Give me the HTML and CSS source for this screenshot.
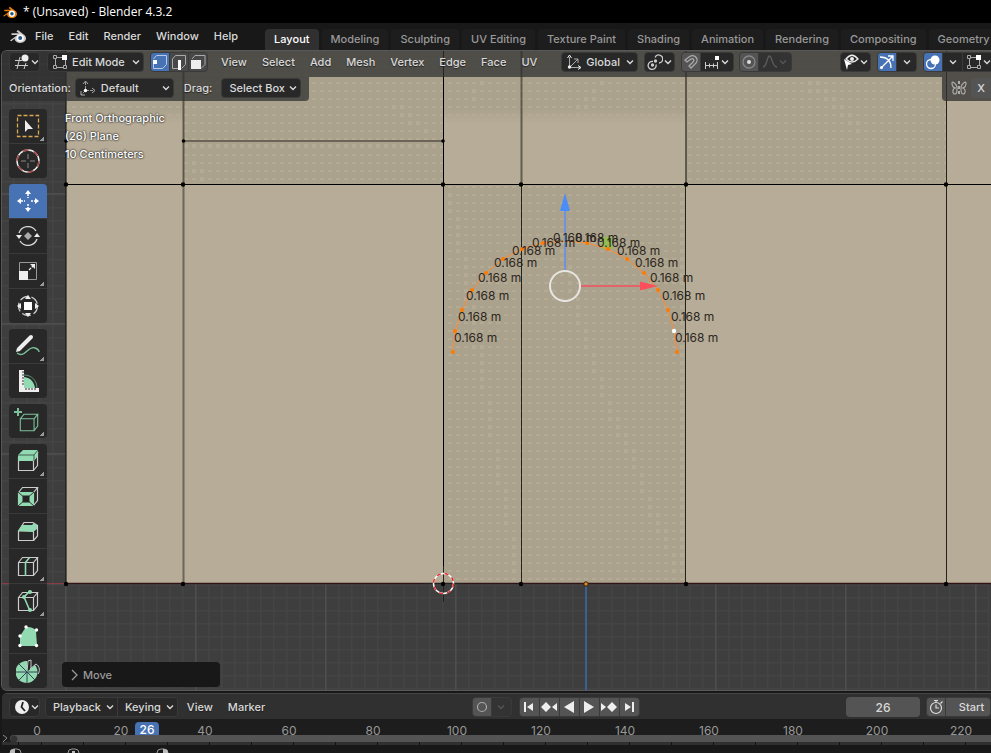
FILE: index.html
```html
<!DOCTYPE html>
<html lang="en">

<head>
    <meta charset="UTF-8">
    <meta name="viewport" content="width=device-width, initial-scale=1.0">
    <title>* (Unsaved) - Blender 4.3.2</title>

    <link rel="stylesheet" href="styles.css">
</head>

<body>
    <!-- Shared icons -->
    <svg class="sprite" aria-hidden="true">
        <symbol id="chevron" viewBox="0 0 10 10"><path d="M2 3.5l3 3 3-3" fill="none" stroke="currentColor" stroke-width="1.4"/></symbol>
        <symbol id="blender" viewBox="0 0 18 16">
            <path d="M1 12.5L8.5 7H2.5V5.3H10L7.5 3.4 8.9 2l7 5.4c3 3.8-.5 7.6-4.7 7.6-3.6 0-5.6-2.2-5.6-4.4L2.3 13.2z" fill="currentColor"/>
            <circle class="logo-ring" cx="11.2" cy="10" r="3.6"/>
            <circle class="logo-eye" cx="11.2" cy="10" r="2"/>
        </symbol>
        <symbol id="vertices" viewBox="0 0 16 16">
            <path d="M3.5 5v7M5 13.5h7M13.5 12V6M5 3.5h5" fill="none" stroke="#aaa"/>
            <path d="M1.5 1.5h3v3h-3zM1.5 11.5h3v3h-3zM11.500 11.500h3v3h-3z" fill="none" stroke="#aaa"/>
            <path d="M10 1h5v5h-5z" fill="#fff"/>
        </symbol>
        <symbol id="cube" viewBox="0 0 24 24"><path d="M2.500 8.500h15v13h-15zM2.500 8.500l4-5h15l-4 5M21.500 3.500v13l-4 5" fill="none" stroke="currentColor" stroke-width="1.200"/></symbol>
    </svg>

    <!-- Window title -->
    <header class="titlebar">
        <svg class="logo logo-orange" width="16" height="14"><use href="#blender"/></svg>
        <span>* (Unsaved) - Blender 4.3.2</span>
    </header>

    <!-- Main menu and workspaces -->
    <div class="topbar">
        <svg class="logo logo-grey" width="18" height="16"><use href="#blender"/></svg>
        <nav class="menus">
            <a href="#">File</a>
            <a href="#">Edit</a>
            <a href="#">Render</a>
            <a href="#">Window</a>
            <a href="#">Help</a>
        </nav>
        <nav class="tabs">
            <a href="#" class="active">Layout</a>
            <a href="#">Modeling</a>
            <a href="#">Sculpting</a>
            <a href="#">UV Editing</a>
            <a href="#">Texture Paint</a>
            <a href="#">Shading</a>
            <a href="#">Animation</a>
            <a href="#">Rendering</a>
            <a href="#">Compositing</a>
            <a href="#">Geometry Nodes</a>
        </nav>
    </div>

    <!-- 3D viewport -->
    <main class="viewport">
        <svg class="scene" role="img" aria-label="Front orthographic view">
            <defs>
                <pattern id="minor" x="0" y="12" width="13" height="13" patternUnits="userSpaceOnUse"><path d="M0 .5h13M.5 0v13" stroke="#444" fill="none" stroke-width="2"/></pattern>
                <pattern id="major" x="65" y="63" width="130" height="130" patternUnits="userSpaceOnUse"><path d="M0 .5h130M.5 0v130" stroke="#4e4e4e" fill="none" stroke-width="2"/></pattern>
                <pattern id="dots" x="0" y="2" width="8" height="8" patternUnits="userSpaceOnUse"><rect width="4" height="2" fill="#b5ab95"/></pattern>
                <linearGradient id="fade" x1="0" y1="0" x2="0" y2="1"><stop offset=".8" stop-color="#aba28d"/><stop offset="1" stop-color="#b7ac97"/></linearGradient>
            </defs>
            <g transform="translate(-2 -51)">
                <rect y="51" width="100%" height="640" fill="#3e3e3e"/>
                <rect y="51" width="100%" height="640" fill="url(#minor)"/>
                <rect y="51" width="100%" height="640" fill="url(#major)"/>
                <path d="M0 583.500h66" stroke="#8d3a45" stroke-width="1"/>

                <!-- wall faces -->
                <rect x="66" y="51" width="100%" height="533" fill="#b7ac97"/>
                <rect x="66" y="51" width="117" height="73" fill="url(#fade)"/>
                <rect x="443" y="51" width="243" height="73" fill="url(#fade)"/>
                <path d="M183 51h260v133H183zM686 51h260v133H686zM443 184h243v400H443z" fill="#aba28d"/>
                <path d="M66 51h620v65H66zM183 116h260v68H183zM686 51h260v133H686zM443 184h243v400H443z" fill="url(#dots)"/>
                <path class="specks" d="M450 193v24M458 217v40M466 257v48M474 305v48M482 345v48M490 401v40M498 449v40M506 489v40M514 537v40M594 353v24M602 377v20M610 401v20M618 417v20M626 433v20M634 449v20M642 473v20M650 497v20M658 513v20M666 529v20M674 553v24M682 193v384M562 233v32M570 265v32M578 297v32M586 329v24M394 105v4M402 105v12M410 113v12M418 121v4M426 129v4M194 161v12M202 169v12M474 89v16M482 81v4M578 105v12M586 97v12M594 89v12M602 81v4M810 81v12M818 81v12M826 89v12M834 97v12M842 105v12M850 113v12M858 121v12"/>
                <path class="specks" d="M184 146h256"/>

                <!-- edges -->
                <path d="M183.500 184v400" stroke="#3d3930" stroke-opacity=".6" stroke-width="2" fill="none"/>
                <path d="M183.500 51v133M521.500 51v133M686 51v133" stroke="#3d3930" stroke-opacity=".7" stroke-width="2" fill="none"/>
                <path d="M183 141h260" stroke="#6b6657" stroke-width="2"/>
                <path d="M521.500 184v400M685.500 184v400M946.500 51v533" stroke="#252219" fill="none"/>
                <path d="M66 51v533M443.500 51v533M66 184.500h925" stroke="#000" fill="none"/>
                <path d="M66 583.500h925" stroke="#321416" stroke-width="1.500"/>
                <path d="M586 584v107" stroke="#3a6194" stroke-width="2"/>
                <path d="M423 583.500h40M443.500 566v36" stroke="#222" stroke-width="1"/>
                <g fill="#000">
                    <circle cx="66" cy="184.500" r="2.200"/><circle cx="183" cy="184.500" r="2.200"/><circle cx="443" cy="184.500" r="2.200"/><circle cx="521" cy="184.500" r="2.200"/><circle cx="686" cy="184.500" r="2.200"/><circle cx="946" cy="184.500" r="2.200"/>
                    <circle cx="66" cy="584" r="2.200"/><circle cx="183" cy="584" r="2.200"/><circle cx="443" cy="584" r="2.200"/><circle cx="521" cy="584" r="2.200"/><circle cx="686" cy="584" r="2.200"/><circle cx="946" cy="584" r="2.200"/>
                    <circle cx="66" cy="141" r="1.800"/><circle cx="183.500" cy="141" r="1.800"/><circle cx="443" cy="141" r="1.800"/>
                </g>

                <!-- 3D cursor and origin -->
                <circle cx="443.500" cy="583.500" r="10" fill="none" stroke="#fff" stroke-width="1.400"/>
                <circle cx="443.500" cy="583.500" r="10" fill="none" stroke="#e22b2b" stroke-width="1.400" stroke-dasharray="4 4"/>
                <circle cx="586" cy="584" r="2.200" fill="#e08a20" stroke="#2a2010"/>

                <!-- selected arch -->
                <rect x="601" y="237" width="12" height="12" fill="#8dc63c" fill-opacity=".7"/>
                <polyline points="453,352 455,331 462,310 472,290 486,273 503,259 522,249 543,243 565,241 587,243 608,249 627,259 644,273 658,290 668,310 674,331 677,352" fill="none" stroke="#ff8c32"/>
                <g fill="#ff7a00">
                    <circle cx="453" cy="352" r="2"/><circle cx="455" cy="331" r="2"/><circle cx="462" cy="310" r="2"/><circle cx="472" cy="290" r="2"/><circle cx="486" cy="273" r="2"/><circle cx="503" cy="259" r="2"/><circle cx="522" cy="249" r="2"/><circle cx="543" cy="243" r="2"/>
                    <circle cx="587" cy="243" r="2"/><circle cx="608" cy="249" r="2"/><circle cx="627" cy="259" r="2"/><circle cx="644" cy="273" r="2"/><circle cx="658" cy="290" r="2"/><circle cx="668" cy="310" r="2"/><circle cx="677" cy="352" r="2"/>
                </g>
                <circle cx="674" cy="331" r="2.200" fill="#fff"/>

                <!-- move gizmo -->
                <path d="M565 270v-60" stroke="#6f93dc" stroke-width="2"/>
                <path d="M565 193l5 18h-10z" fill="#4b8df8"/>
                <path d="M581 286h60" stroke="#e4636a" stroke-width="2"/>
                <path d="M658 286l-18 4.500v-9z" fill="#fb4f5c"/>
                <circle cx="565" cy="286" r="15" fill="none" stroke="#e8e6e2" stroke-width="2"/>

                <!-- edge lengths -->
                <g class="lengths">
                    <text x="454" y="342">0.168 m</text>
                    <text x="458" y="321">0.168 m</text>
                    <text x="466" y="300">0.168 m</text>
                    <text x="478" y="282">0.168 m</text>
                    <text x="494" y="267">0.168 m</text>
                    <text x="512" y="255">0.168 m</text>
                    <text x="532" y="247">0.168 m</text>
                    <text x="553" y="242">0.168 m</text>
                    <text x="575" y="242">0.168 m</text>
                    <text x="597" y="247">0.168 m</text>
                    <text x="617" y="255">0.168 m</text>
                    <text x="635" y="267">0.168 m</text>
                    <text x="650" y="282">0.168 m</text>
                    <text x="662" y="300">0.168 m</text>
                    <text x="671" y="321">0.168 m</text>
                    <text x="675" y="342">0.168 m</text>
                </g>
            </g>
        </svg>

        <!-- Viewport header -->
        <div class="view-header">
            <button class="box editor-type" aria-label="Editor type">
                <svg width="16" height="16"><path d="M1 6.500h7M1 11.500h13M6 3L3 15M12 9l-2 6" stroke="#ccc" fill="none"/><circle cx="11" cy="4" r="3.500" fill="#eee"/></svg>
                <svg width="10" height="10"><use href="#chevron"/></svg>
            </button>
            <label class="box dropdown mode">
                <svg width="16" height="16"><use href="#vertices"/></svg>
                <select aria-label="Mode"><option>Edit Mode</option></select>
                <svg width="10" height="10"><use href="#chevron"/></svg>
            </label>
            <div class="joined select-modes">
                <button class="on" aria-label="Vertex select"><svg width="16" height="16"><path d="M1.500 5l3-3.500h10v9l-4 4h-9v-5" fill="none" stroke="#b9cae8"/><path d="M1 6h4v4H1z" fill="#fff"/></svg></button>
                <button aria-label="Edge select"><svg width="16" height="16"><path d="M7 14.500H1.500V5l3-3.500h10v9l-4 4" fill="none" stroke="#aaa"/><path d="M7 6h3v10H7z" fill="#fff"/></svg></button>
                <button aria-label="Face select"><svg width="16" height="16"><path d="M2 5l3-3.500h10v9l-4 4" fill="none" stroke="#aaa"/><path d="M1 6h10v9H1z" fill="#eee"/></svg></button>
            </div>
            <nav class="view-menus">
                <a href="#">View</a>
                <a href="#">Select</a>
                <a href="#">Add</a>
                <a href="#">Mesh</a>
                <a href="#">Vertex</a>
                <a href="#">Edge</a>
                <a href="#">Face</a>
                <a href="#">UV</a>
            </nav>
            <label class="box dropdown transform">
                <svg width="16" height="16"><path d="M3.500 3v10.500H14M4 13l8-8M8 5h4v4" fill="none" stroke="#aaa"/><path d="M1.500 4l2-3 2 3M12 11.500l3 2-3 2" fill="none" stroke="#eee"/><circle cx="3.500" cy="13" r="1.700" fill="#eee"/></svg>
                <select aria-label="Transform orientation"><option>Global</option></select>
                <svg width="10" height="10"><use href="#chevron"/></svg>
            </label>
            <button class="box pivot" aria-label="Pivot point">
                <svg width="16" height="16" fill="none" stroke="#ccc" stroke-width="1.300"><path d="M6 7.500a4 4 0 1 0 3 3"/><path d="M8 3.500A4 4 0 1 1 12 9"/><circle cx="5.500" cy="11" r="1" fill="#eee"/><circle cx="8.500" cy="7" r="1" fill="#eee"/></svg>
                <svg width="10" height="10"><use href="#chevron"/></svg>
            </button>
            <div class="joined snap">
                <button class="light" aria-label="Snap"><svg width="16" height="16"><path d="M2 6l4-3c6-4 11 3 6 7l-4 4-2-2 4-4c2-2 0-4-2-3L4 8z" fill="none" stroke="#aaa" stroke-width="1.300"/></svg></button>
                <button class="dark snap-to" aria-label="Snapping">
                    <svg width="16" height="16"><path d="M1 11.500h13M1.500 8v7M5.500 9.500v4M9.500 9.500v4M13.500 8v7" stroke="#ccc" fill="none"/><path d="M11 2h4v4h-4z" fill="#fff"/></svg>
                    <svg width="10" height="10"><use href="#chevron"/></svg>
                </button>
            </div>
            <div class="joined proportional">
                <button class="light" aria-label="Proportional editing"><svg width="16" height="16"><circle cx="8" cy="8" r="6" fill="none" stroke="#888" stroke-width="1.300"/><circle cx="8" cy="8" r="2" fill="#ddd"/></svg></button>
                <button class="faint" aria-label="Falloff">
                    <svg width="16" height="16"><path d="M1 13c4 0 4-11 6.500-11S10 13 15 13" fill="none" stroke="#888" stroke-width="1.300"/></svg>
                    <svg width="10" height="10"><use href="#chevron"/></svg>
                </button>
            </div>
            <div class="view-options">
                <button class="box visibility" aria-label="Visibility">
                    <svg width="16" height="16"><path d="M3 5c4-5 8-5 12 0-4 4-8 4-12 0z" fill="none" stroke="#eee" stroke-width="1.300"/><circle cx="9" cy="5" r="2" fill="#eee"/><path d="M1 5l8 5-4 1-1 5z" fill="#fff"/></svg>
                    <svg width="10" height="10"><use href="#chevron"/></svg>
                </button>
                <div class="joined">
                    <button class="on" aria-label="Gizmos"><svg width="16" height="16"><path d="M1 3c7 0 11 4 11 11M2 14L14 2M9 2h5v5" fill="none" stroke="#fff" stroke-width="1.300"/><circle cx="2.500" cy="13.500" r="1.500" fill="#fff"/></svg></button>
                    <button class="dark drop" aria-label="Gizmo options"><svg width="10" height="10"><use href="#chevron"/></svg></button>
                </div>
                <div class="joined">
                    <button class="on" aria-label="Overlays"><svg width="16" height="16"><circle cx="10" cy="6" r="4.500" fill="#fff"/><circle cx="6" cy="10" r="4.500" fill="none" stroke="#fff" stroke-width="1.300"/></svg></button>
                    <button class="dark drop" aria-label="Overlay options"><svg width="10" height="10"><use href="#chevron"/></svg></button>
                    <button class="dark snap-to" aria-label="Mesh overlays">
                        <svg width="16" height="16"><use href="#vertices"/></svg>
                        <svg width="10" height="10"><use href="#chevron"/></svg>
                    </button>
                </div>
            </div>
        </div>

        <!-- Tool settings -->
        <div class="tool-settings">
            <div class="settings-left">
                <label for="orientation">Orientation:</label>
                <div class="box dropdown orientation">
                    <svg width="16" height="16"><path d="M5.500 2v8M6 10.500h8M5 11l-4 4" fill="none" stroke="#999" stroke-dasharray="3 1"/><path d="M3 4l2.500-3L8 4M12 8l3 2.500-3 2.500M1 11v4h4" fill="none" stroke="#aaa"/><circle cx="5.500" cy="10.500" r="1.700" fill="#fff"/></svg>
                    <select id="orientation"><option>Default</option></select>
                    <svg width="10" height="10"><use href="#chevron"/></svg>
                </div>
                <label for="drag">Drag:</label>
                <div class="box dropdown drag">
                    <select id="drag"><option>Select Box</option></select>
                    <svg width="10" height="10"><use href="#chevron"/></svg>
                </div>
            </div>
            <div class="settings-right">
                <svg width="16" height="16" fill="none" stroke="#aaa" stroke-width="1.200"><path d="M6 7C5 3 1 1 1 3s0 5 4 5c-4 0-4 6-1 6 2 0 2-3 2-5zM10 7c1-4 5-6 5-4s0 5-4 5c4 0 4 6 1 6-2 0-2-3-2-5z"/><path d="M8 1v14" stroke-dasharray="3 2" stroke="#eee"/></svg>
                <button class="mirror">X</button>
            </div>
        </div>

        <div class="view-body">
            <!-- Toolbar -->
            <div class="toolbar">
                <div class="tools">
                    <button class="more" aria-label="Select box"><svg width="24" height="24"><rect x="1.500" y="1.500" width="21" height="21" fill="none" stroke="#d9a851" stroke-width="1.300" stroke-dasharray="4 2"/><path d="M9 6v12l3-3h5z" fill="#eee"/></svg></button>
                    <button aria-label="Cursor"><svg width="24" height="24" fill="none"><circle cx="12" cy="12" r="11" stroke="#eee" stroke-width="1.400"/><circle cx="12" cy="12" r="11" stroke="#a54242" stroke-width="1.400" stroke-dasharray="6 5.500"/><path d="M12 5v5M12 14v5M5 12h5M14 12h5" stroke="#888"/></svg></button>
                </div>
                <div class="tools">
                    <button class="on" aria-label="Move"><svg width="24" height="24"><path d="M12 1l3 4H9zM12 23l3-4H9zM1 12l4-3v6zM23 12l-4-3v6z" fill="#fff"/><path d="M12 5v4M12 15v4M5 12h4M15 12h4" stroke="#fff" stroke-width="1.500" stroke-dasharray="2 1"/></svg></button>
                    <button aria-label="Rotate"><svg width="24" height="24"><path d="M3 9a9.500 9.500 0 0 1 17 -2M21 15a9.500 9.500 0 0 1-17 2" fill="none" stroke="#ddd" stroke-width="1.300"/><path d="M0 11h6l-3 4zM18 13h6l-3-4z" fill="#eee"/><path d="M12 8l4 4-4 4-4-4z" fill="#aaa"/></svg></button>
                    <button class="more" aria-label="Scale"><svg width="24" height="24"><path d="M3.500 12V3.500h17v17H12" fill="none" stroke="#999"/><path d="M3 12h9v9H3z" fill="#eee"/><path d="M13 11l5-5" stroke="#eee" stroke-width="1.300" stroke-dasharray="3 1"/><path d="M14 5h5v5z" fill="#eee"/></svg></button>
                    <button aria-label="Transform"><svg width="24" height="24"><circle cx="12" cy="12" r="9.500" fill="none" stroke="#ccc" stroke-width="1.300" stroke-dasharray="9 3"/><path d="M8 8h8v8H8z" fill="#fff"/><path d="M12 1l3 4H9zM12 23l3-4H9zM1 12l4-3v6zM23 12l-4-3v6z" fill="#eee"/></svg></button>
                </div>
                <div class="tools">
                    <button class="more" aria-label="Annotate"><svg width="26" height="24"><path d="M2 19c8 6 11-8 18-5 3 1 4 2 4 4" fill="none" stroke="#7cc09a" stroke-width="1.400"/><path d="M4 15L16 3" stroke="#eee" stroke-width="4" stroke-linecap="round"/><path d="M1 18l1-4 3 3z" fill="#eee"/></svg></button>
                    <button aria-label="Measure"><svg width="24" height="24"><path d="M8 8c7 1 10 5 11 11H8z" fill="#92dbb2"/><path d="M8 6c8 0 13 6 13 13" fill="none" stroke="#5e8f75"/><path d="M3 1h5v18h15v4H3z" fill="#eee"/><path d="M6 3h2M6 6h2M6 9h2M6 12h2M6 15h2M10 21v-2M13 21v-2M16 21v-2M19 21v-2" stroke="#333"/></svg></button>
                </div>
                <div class="tools">
                    <button class="more" aria-label="Add cube"><svg class="green" width="28" height="26"><use href="#cube" x="4" y="3" width="22" height="22"/><path d="M4 0v8M0 4h8" stroke="currentColor" stroke-width="2"/></svg></button>
                </div>
                <div class="tools">
                    <button class="more" aria-label="Extrude region"><svg width="24" height="24"><use href="#cube"/><path d="M2 6l5-5h15v6l-4 5H2z" fill="#92dbb2"/><path d="M2 6h16l4-5M18 6v6" fill="none" stroke="#42614f"/></svg></button>
                    <button aria-label="Inset faces"><svg width="24" height="24"><use href="#cube"/><path d="M2 8h16v14H2z" fill="#92dbb2"/><path d="M2 8l16 14M18 8L2 22" stroke="#333"/><path d="M6.500 11.500h7v7h-7z" fill="#252525"/></svg></button>
                    <button aria-label="Bevel"><svg width="24" height="24"><path d="M2.500 12h15v9.500h-15zM21.500 6v11l-4 4.500M2.500 12L8 3.500h9l4.500 3" fill="none" stroke="#ccc" stroke-width="1.200"/><path d="M2 12l4-6h10l2-2 3 2v4l-4 3z" fill="#92dbb2"/></svg></button>
                    <button class="more" aria-label="Loop cut"><svg width="24" height="24"><use href="#cube"/><path d="M9.500 22V8.500l4-5" fill="none" stroke="#92dbb2" stroke-width="1.600"/></svg></button>
                    <button class="more" aria-label="Knife"><svg width="24" height="24"><use href="#cube"/><path d="M14 2L8 8l6 14" fill="none" stroke="#92dbb2" stroke-width="1.600"/><circle cx="14" cy="3" r="2" fill="#92dbb2"/><circle cx="8" cy="8" r="2" fill="#92dbb2"/><circle cx="14" cy="21" r="2" fill="#92dbb2"/></svg></button>
                    <button aria-label="Poly build"><svg width="24" height="24"><path d="M4 12l6-9c6 0 8 1 10 4l1 15H4z" fill="#92dbb2"/><g fill="#fff"><circle cx="10" cy="3" r="1.700"/><circle cx="20.500" cy="6" r="1.700"/><circle cx="4" cy="12" r="1.700"/><circle cx="4" cy="21.500" r="1.700"/><circle cx="20.500" cy="21.500" r="1.700"/></g></svg></button>
                    <button aria-label="Spin"><svg width="24" height="24"><path d="M11 13L12 2l3-1v10zM14 10l6-5c4 2 4 8 2 10" fill="none" stroke="#ccc"/><path d="M11 13V2a11 11 0 1 0 8 4z" fill="#92dbb2"/><path d="M11 13H0M11 13h11M11 13v11M11 13L3 5M11 13l-8 8M11 13l8 8" stroke="#345"/></svg></button>
                </div>
            </div>

            <div class="view-info">
                <p>Front Orthographic</p>
                <p>(26) Plane</p>
                <p>10 Centimeters</p>
            </div>

            <button class="operator">
                <svg width="10" height="12"><path d="M3 1l5 5-5 5" fill="none" stroke="#999" stroke-width="1.300"/></svg>
                Move
            </button>
        </div>
    </main>

    <!-- Timeline -->
    <section class="timeline">
        <div class="time-header">
            <button class="box editor-type" aria-label="Editor type">
                <svg width="16" height="16"><circle cx="8" cy="8" r="7" fill="#eee"/><path d="M9 3L7.500 8l3.500 4" fill="none" stroke="#222" stroke-width="1.800"/></svg>
                <svg width="10" height="10"><use href="#chevron"/></svg>
            </button>
            <div class="joined time-menus">
                <button class="dark">Playback<svg width="10" height="10"><use href="#chevron"/></svg></button>
                <button class="dark">Keying<svg width="10" height="10"><use href="#chevron"/></svg></button>
            </div>
            <nav class="view-menus">
                <a href="#">View</a>
                <a href="#">Marker</a>
            </nav>
            <div class="time-controls">
                <div class="joined">
                    <button class="light" aria-label="Auto keying"><svg width="16" height="16"><circle cx="8" cy="8" r="4.500" fill="none" stroke="#aaa" stroke-width="1.200"/></svg></button>
                    <button class="faint drop" aria-label="Auto keying options"><svg width="10" height="10"><use href="#chevron"/></svg></button>
                </div>
                <div class="joined transport">
                    <button class="light" aria-label="Jump to start"><svg width="16" height="16"><path d="M3 3h2v10H3zM12 4v8L6 8z" fill="#eee"/></svg></button>
                    <button class="light" aria-label="Previous keyframe"><svg width="16" height="16"><path d="M5 3l5 5-5 5-5-5zM16 4v8l-5-4z" fill="#eee"/></svg></button>
                    <button class="light" aria-label="Play reversed"><svg width="16" height="16"><path d="M13 2v12L3 8z" fill="#eee"/></svg></button>
                    <button class="light" aria-label="Play"><svg width="16" height="16"><path d="M3 2v12l10-6z" fill="#eee"/></svg></button>
                    <button class="light" aria-label="Next keyframe"><svg width="16" height="16"><path d="M11 3l5 5-5 5-5-5zM0 4v8l5-4z" fill="#eee"/></svg></button>
                    <button class="light" aria-label="Jump to end"><svg width="16" height="16"><path d="M11 3h2v10h-2zM4 4v8l6-4z" fill="#eee"/></svg></button>
                </div>
            </div>
            <div class="frame-range">
                <input class="frame" type="text" value="26" aria-label="Current frame">
                <div class="joined">
                    <button class="light" aria-label="Use preview range"><svg width="16" height="16" fill="none" stroke="#ddd" stroke-width="1.200"><circle cx="8" cy="9" r="5.500"/><path d="M8 5.500V9h3M6 1.500h4M8 1.500v2M12.500 4.500l2-2"/></svg></button>
                    <button class="light start">Start</button>
                </div>
            </div>
        </div>
        <div class="ruler">
            <span>0</span><span>20</span><span>40</span><span>60</span><span>80</span><span>100</span><span>120</span><span>140</span><span>160</span><span>180</span><span>200</span><span>220</span>
            <b class="playhead">26</b>
        </div>
        <div class="scrollbar">
            <svg width="8" height="7"><path d="M1 0l4 3-4 4" fill="none" stroke="#888"/></svg>
            <div class="thumb"></div>
        </div>
        <div class="ticks"></div>
    </section>

    <!-- Status bar -->
    <footer class="status">
        <svg width="14" height="14"><rect x="1" y="1" width="11" height="14" rx="4" fill="none" stroke="#999"/><path d="M1 6V4q0-3 5-3v5z" fill="#bbb"/></svg>
        <svg width="14" height="14"><rect x="1" y="1" width="11" height="14" rx="4" fill="none" stroke="#999"/><path d="M5 3h3v5H5z" fill="#bbb"/></svg>
        <svg class="right-click" width="14" height="14"><rect x="1" y="1" width="11" height="14" rx="4" fill="none" stroke="#999"/><path d="M12 6V4q0-3-5-3v5z" fill="#bbb"/></svg>
    </footer>
</body>

</html>
```
FILE: styles.css
```css
* {
    margin: 0;
    padding: 0;
    box-sizing: border-box;
}

body {
    height: 100vh;
    display: flex;
    flex-direction: column;
    overflow: hidden;
    background: #181818;
    color: #d9d9d9;
    font-family: Inter, "Liberation Sans", sans-serif;
    font-size: 11px;
    font-weight: 500;
    line-height: 16px;
}

a {
    color: inherit;
    text-decoration: none;
}

button,
input,
select {
    font: inherit;
    color: inherit;
    border: none;
    background: none;
}

svg {
    display: block;
    flex-shrink: 0;
}

.sprite {
    position: absolute;
    width: 0;
    height: 0;
}

/* Window title */
.titlebar {
    display: flex;
    align-items: center;
    flex-shrink: 0;
    gap: 5px;
    height: 23px;
    padding-left: 2px;
    background: #000;
    color: #fff;
    font-family: "Open Sans", "Noto Sans", sans-serif;
    font-size: 12px;
    font-weight: 400;
}

.logo-orange {
    color: #e87d0d;
}

.logo-ring {
    fill: #fff;
}

.logo-eye {
    fill: #265787;
}

/* the top bar logo is a flat grey one */
.logo-grey {
    color: #ccc;
}

.logo-grey .logo-ring {
    fill: #181818;
}

.logo-grey .logo-eye {
    fill: #ccc;
}

/* Top bar */
.topbar {
    display: flex;
    flex-shrink: 0;
    height: 28px;
    padding: 4px 0 0 9px;
    overflow: hidden;
    white-space: nowrap;
}

.topbar .logo {
    margin-top: 1px;
}

.menus {
    display: flex;
    gap: 15px;
    margin: 1px 27px 0 8px;
}

.tabs {
    display: flex;
    gap: 3px;
    padding-top: 2px;
    color: #989898;
}

.tabs a {
    height: 22px;
    padding: 2px 9px 0;
    background: #1d1d1d;
    border-radius: 4px 4px 0 0;
}

.tabs .active {
    background: #303030;
    color: #fff;
}

/* Viewport */
.viewport {
    position: relative;
    display: flex;
    flex-direction: column;
    flex: 1;
    min-height: 0;
    margin: 0 0 3px 2px;
    overflow: hidden;
    border-radius: 5px 0 0 5px;
    box-shadow: 0 0 0 1px #585858;
    background: #3e3e3e;
}

.scene {
    position: absolute;
    inset: 0;
    width: 100%;
    height: 100%;
}

.specks {
    fill: none;
    stroke: #b5ab95;
    stroke-width: 4px;
    stroke-dasharray: 4 4;
}

.lengths {
    fill: #2b2620;
    font-size: 12px;
    font-weight: 400;
}

.view-header,
.tool-settings,
.view-body {
    position: relative;
}

.view-header {
    display: flex;
    flex-shrink: 0;
    height: 26px;
    padding: 1px 0 0 7px;
    background: rgba(48, 48, 48, 0.75);
    white-space: nowrap;
    overflow: hidden;
}

.view-header > *,
.view-options > * {
    flex-shrink: 0;
}

/* Buttons and drop-downs */
.box,
.joined {
    display: flex;
    align-items: center;
    height: 20px;
    border: 1px solid #3a3a3a;
    border-radius: 4px;
    background: #282828;
}

.joined {
    overflow: hidden;
    gap: 1px;
    background: #3a3a3a;
}

.joined button {
    display: flex;
    align-items: center;
    justify-content: center;
    min-width: 18px;
    height: 18px;
    background: #484848;
}

.joined .light {
    background: #545454;
}

.joined .dark {
    background: #282828;
}

.joined .faint {
    background: #333;
    color: #777;
}

.joined .faint svg {
    opacity: 0.5;
}

.joined .on,
.tools .on {
    background: #4772b3;
}

.editor-type {
    justify-content: space-between;
    width: 31px;
    padding: 0 2px 0 4px;
}

.dropdown {
    gap: 8px;
    padding: 0 2px 0 4px;
}

.dropdown select {
    flex: 1;
    min-width: 0;
    appearance: none;
    outline: none;
    text-overflow: clip;
}

.mode {
    width: 97px;
    margin: 0 6px 0 7px;
    gap: 4px;
}

.select-modes button {
    min-width: 18px;
}

.view-menus {
    display: flex;
    gap: 15px;
    padding: 2px 0 0 13px;
    text-shadow: 0 1px 1px #222;
}

.transform {
    width: 77px;
    margin-left: 24px;
    gap: 4px;
}

.pivot,
.visibility {
    justify-content: space-between;
    width: 31px;
    padding: 0 2px;
}

.pivot {
    margin-left: 6px;
}

.snap {
    margin-left: 6px;
}

.joined .snap-to {
    width: 32px;
}

.proportional {
    margin-left: 5px;
}

.proportional .faint {
    width: 32px;
}

.view-options {
    display: flex;
    gap: 6px;
    margin-left: 48px;
}

.joined .drop {
    width: 19px;
}

/* Tool settings row */
.tool-settings {
    display: flex;
    justify-content: space-between;
    flex-shrink: 0;
    height: 24px;
}

.settings-left,
.settings-right {
    display: flex;
    align-items: center;
    height: 24px;
    background: rgba(48, 48, 48, 0.75);
}

.settings-left {
    padding: 0 8px 3px 7px;
    border-radius: 0 0 4px 0;
    text-shadow: 0 1px 1px #222;
}

.orientation {
    width: 99px;
    margin: 0 10px 0 4px;
    gap: 5px;
}

.drag {
    width: 80px;
    margin-left: 9px;
    padding-left: 7px;
    gap: 2px;
}

.settings-right {
    gap: 4px;
    padding-left: 9px;
    padding-bottom: 3px;
    border-radius: 0 0 0 4px;
}

.mirror {
    width: 20px;
    height: 20px;
    border-radius: 4px 0 0 4px;
    background: #545454;
}

/* Toolbar */
.view-body {
    display: flex;
    flex: 1;
    min-height: 0;
    padding: 8px 0 0 7px;
}

.toolbar {
    display: flex;
    flex-direction: column;
    gap: 6px;
    width: 38px;
}

.tools {
    display: flex;
    flex-direction: column;
    flex-shrink: 0;
    gap: 1px;
    overflow: hidden;
    border-radius: 4px;
    background: #3a3a3a;
}

.tools button {
    display: flex;
    align-items: center;
    justify-content: center;
    height: 34px;
    background: #282828;
    color: #ccc;
}

.tools .on {
    background: #4772b3;
}

.tools .more {
    background: linear-gradient(135deg, transparent 50%, #999 50%) no-repeat right 3px bottom 2px / 4px 4px #282828;
}

.green {
    color: #7cc09a;
}

.view-info {
    margin-left: 18px;
    color: #fff;
    line-height: 18px;
    text-shadow: 0 0 2px #222, 0 0 2px #222;
}

.operator {
    position: absolute;
    left: 60px;
    bottom: 3px;
    display: flex;
    align-items: center;
    gap: 4px;
    width: 158px;
    height: 25px;
    padding-left: 7px;
    border-radius: 4px;
    background: #181818;
    color: #999;
}

/* Timeline */
.timeline {
    flex-shrink: 0;
    margin-left: 2px;
    border-top: 1px solid #444;
    border-radius: 5px 0 0 0;
    background: #1d1d1d;
    overflow: hidden;
}

.time-header {
    display: flex;
    height: 25px;
    padding: 3px 0 0 7px;
    background: #303030;
    white-space: nowrap;
}

.time-menus {
    margin-left: 5px;
}

.time-menus button {
    gap: 4px;
    padding: 0 2px 0 7px;
}

.time-menus + .view-menus {
    padding-left: 9px;
}

.time-controls {
    display: flex;
    flex: 1;
    justify-content: center;
    gap: 7px;
}

.transport button {
    width: 19px;
}

.frame-range {
    display: flex;
    gap: 6px;
}

.frame {
    width: 74px;
    height: 20px;
    border-radius: 4px;
    background: #545454;
    font-size: 12px;
    text-align: center;
}

.joined .start {
    width: 44px;
    padding-left: 7px;
}

.ruler {
    position: relative;
    display: flex;
    height: 16px;
    margin-left: -7px;
    padding-top: 4px;
    overflow: hidden;
    color: #989898;
    font-size: 12px;
    font-weight: 400;
}

.ruler span {
    flex: 0 0 84px;
    text-align: center;
}

.playhead {
    position: absolute;
    left: 140px;
    top: 3px;
    width: 24px;
    height: 16px;
    border-radius: 4px;
    background: #4772b3;
    color: #fff;
    font-weight: 500;
    text-align: center;
}

.scrollbar {
    display: flex;
    height: 7px;
}

.thumb {
    flex: 1;
    border-radius: 4px 0 0 4px;
    background: radial-gradient(circle at 4px 4px, #333 3px, transparent 4px) #545454;
}

.ticks {
    height: 3px;
    background: repeating-linear-gradient(90deg, #111 0 1px, transparent 1px 42px) 39px 0 #303030;
}

/* Status bar */
.status {
    display: flex;
    flex-shrink: 0;
    gap: 44px;
    height: 8px;
    padding: 3px 0 0 9px;
    overflow: hidden;
}

.right-click {
    margin-left: 31px;
}
```
